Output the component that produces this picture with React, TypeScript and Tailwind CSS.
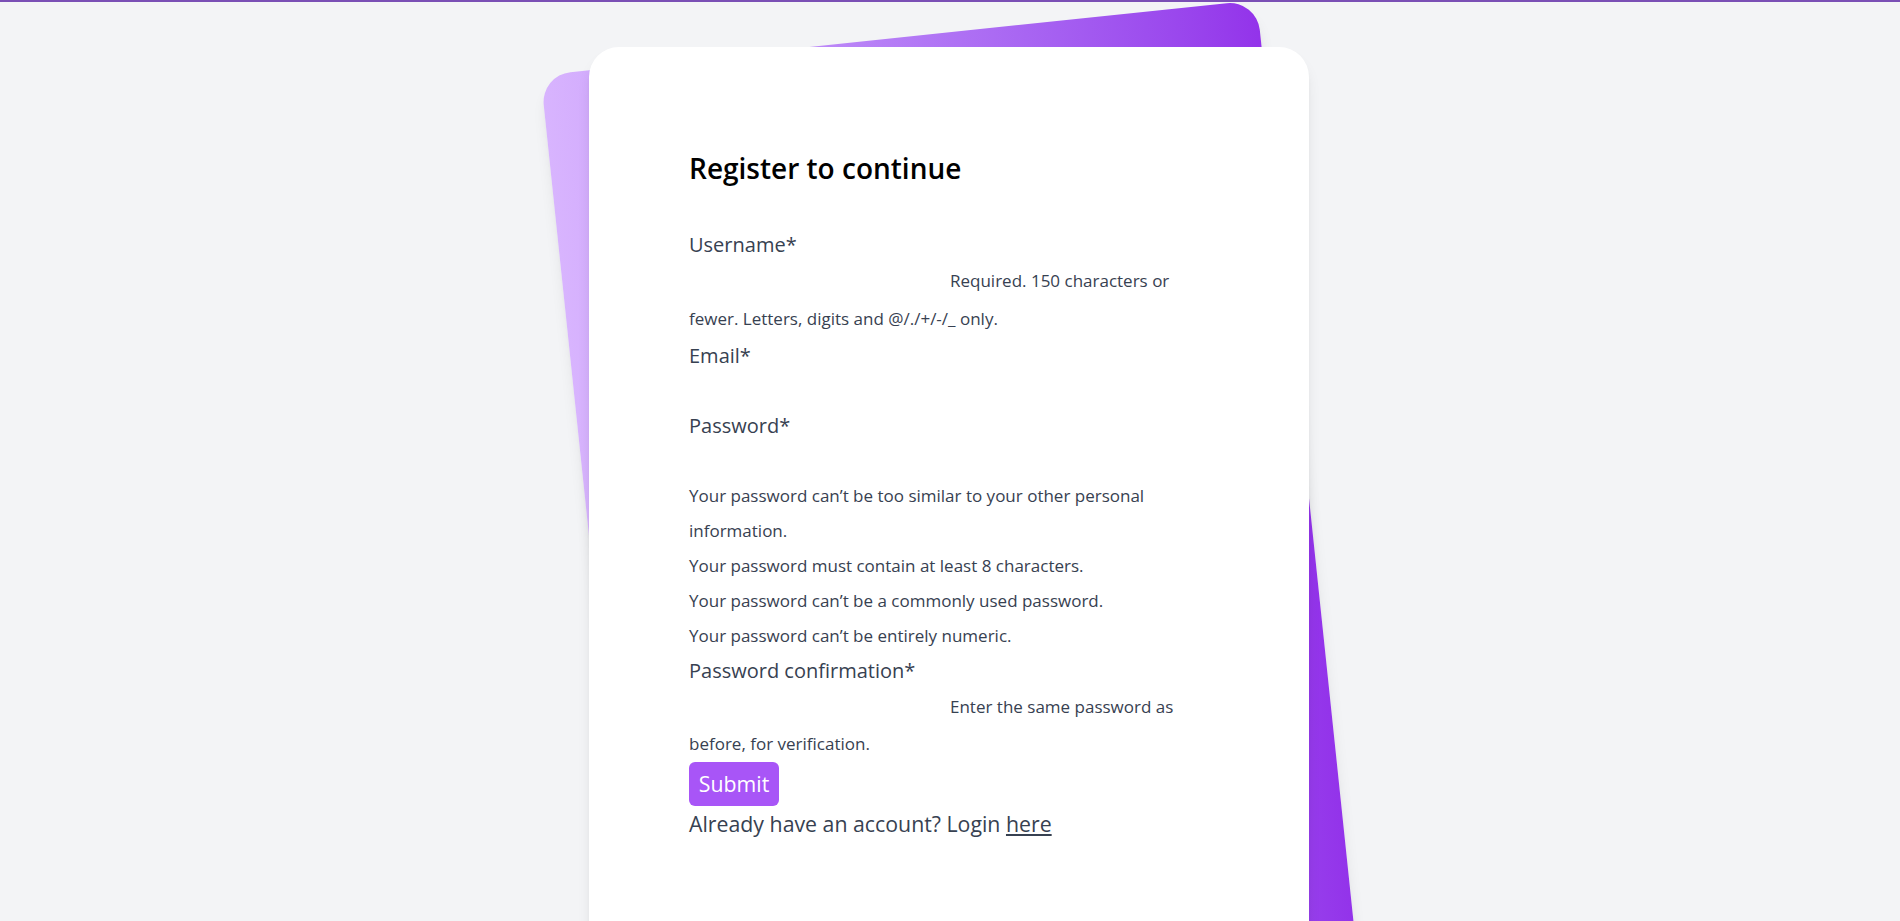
export default function App() {
  return (
    <main className="min-h-screen bg-[#f3f4f6] border-t-2 border-[#7a4fb5] font-['Open_Sans',sans-serif]">
      <div className="relative mx-auto mt-[33px] w-[720px] -translate-x-px py-3">
        {/* tilted backdrop */}
        <div className="absolute inset-0 -rotate-6 rounded-[30px] bg-linear-to-r from-[#d8b4fe] to-[#9333ea] shadow-lg"></div>

        <div className="relative rounded-[30px] bg-white px-[100px] pt-[100px] pb-[146px] shadow-lg">
          <h1 className="mb-[38px] text-[28px] leading-[42px] font-semibold text-black">
            Register to continue
          </h1>

          <form className="text-[#374151]">
            {/* Username */}
            <label className="block text-[20px] leading-[35px]">Username*</label>
            <p className="text-[17px] leading-[38px]">
              <span className="inline-block w-[261px]"></span>
              Required. 150 characters or fewer. Letters, digits and @/./+/-/_ only.
            </p>

            {/* Email */}
            <label className="block text-[20px] leading-[35px]">Email*</label>
            <div className="h-[35px]"></div>

            {/* Password */}
            <label className="block text-[20px] leading-[35px]">Password*</label>
            <div className="h-[35px]"></div>
            <ul className="text-[17px] leading-[35px]">
              <li>Your password can’t be too similar to your other personal information.</li>
              <li>Your password must contain at least 8 characters.</li>
              <li>Your password can’t be a commonly used password.</li>
              <li>Your password can’t be entirely numeric.</li>
            </ul>

            {/* Password confirmation */}
            <label className="block text-[20px] leading-[35px]">Password confirmation*</label>
            <p className="text-[17px] leading-[37px]">
              <span className="inline-block w-[261px]"></span>
              Enter the same password as before, for verification.
            </p>

            <button
              type="button"
              className="block h-[44px] w-[90px] rounded-md bg-[#a855f7] text-[21.3px] leading-[44px] text-white"
            >
              Submit
            </button>
            <p className="text-[21.3px] leading-[35px]">
              Already have an account? Login <a className="underline">here</a>
            </p>
          </form>
        </div>
      </div>
    </main>
  )
}
